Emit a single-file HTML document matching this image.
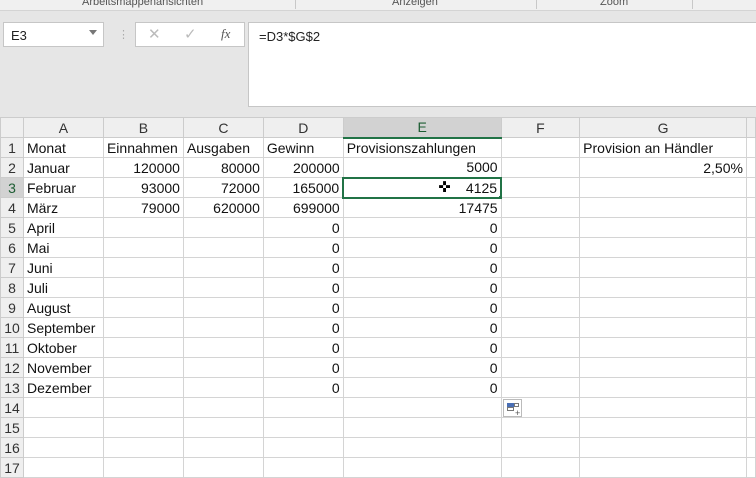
<!DOCTYPE html>
<html><head><meta charset="utf-8"><style>
*{margin:0;padding:0;box-sizing:border-box}
body{width:756px;height:471px;overflow:hidden;background:#e6e6e6;font-family:"Liberation Sans",sans-serif;position:relative}
.rib{position:absolute;left:0;top:0;width:756px;height:11px;background:#f0f0f0;border-bottom:1px solid #d4d4d4;font-size:11px;color:#555;overflow:hidden}
.rib span{position:absolute;top:-4px}
.sep{position:absolute;top:0;width:1px;height:9px;background:#c8c8c8}
.nb{position:absolute;left:3px;top:22px;width:101px;height:25px;background:#fff;border:1px solid #c6c6c6;font-size:13px;padding:5px 7px;color:#222}
.fb{position:absolute;left:135px;top:22px;width:110px;height:25px;background:#fff;border:1px solid #c6c6c6;color:#bbb;font-size:15px}
.fx{position:absolute;left:248px;top:22px;width:508px;height:85px;background:#fff;border:1px solid #c6c6c6;border-right:none;font-size:13px;padding:6px 10px;color:#222}
table{position:absolute;left:0;top:117px;border-collapse:collapse;table-layout:fixed;background:#fff;font-size:14px;color:#111}
td{height:20px;border:1px solid #d4d4d4;padding:0 3px;white-space:nowrap;overflow:hidden;line-height:18px}
td.h{background:#efefef;text-align:center;color:#333;border-color:#ccc;font-size:14px}
td.r{text-align:right}
td.s{background:#d2d2d2;color:#1e5e34}
</style></head><body>
<div class="rib"><span style="left:82px">Arbeitsmappenansichten</span><span style="left:392px">Anzeigen</span><span style="left:600px">Zoom</span>
<div class="sep" style="left:295px"></div><div class="sep" style="left:536px"></div><div class="sep" style="left:692px"></div></div>
<div class="nb">E3<span style="position:absolute;right:6px;top:7px;border:4px solid transparent;border-top:5px solid #777"></span></div>
<div style="position:absolute;left:118px;top:28px;color:#aaa;font-size:11px">⋮</div>
<div class="fb"><span style="position:absolute;left:12px;top:2px">✕</span><span style="position:absolute;left:48px;top:2px">✓</span><span style="position:absolute;left:85px;top:3px;color:#555;font-family:'Liberation Serif',serif;font-style:italic;font-size:13px">fx</span></div>
<div class="fx">=D3*$G$2</div>
<table>
<colgroup><col style="width:23px"><col style="width:80px"><col style="width:80px"><col style="width:80px"><col style="width:80px"><col style="width:158px"><col style="width:79px"><col style="width:167px"><col style="width:9px"></colgroup>
<tr><td class="h"></td><td class="h">A</td><td class="h">B</td><td class="h">C</td><td class="h">D</td><td class="h s" style="border-bottom:2px solid #217346">E</td><td class="h">F</td><td class="h">G</td><td class="h"></td></tr>
<tr><td class="h">1</td><td>Monat</td><td>Einnahmen</td><td>Ausgaben</td><td>Gewinn</td><td>Provisionszahlungen</td><td></td><td>Provision an Händler</td><td></td></tr>
<tr><td class="h">2</td><td>Januar</td><td class="r">120000</td><td class="r">80000</td><td class="r">200000</td><td class="r">5000</td><td></td><td class="r">2,50%</td><td></td></tr>
<tr><td class="h s">3</td><td>Februar</td><td class="r">93000</td><td class="r">72000</td><td class="r">165000</td><td class="r" style="border:2px solid #217346;position:relative">4125<span style="position:absolute;left:94px;top:0;font-size:15px;color:#000">✜</span><span style="position:absolute;right:-4px;bottom:-4px;width:6px;height:6px;background:#217346;border:1px solid #fff"></span></td><td></td><td></td><td></td></tr>
<tr><td class="h">4</td><td>März</td><td class="r">79000</td><td class="r">620000</td><td class="r">699000</td><td class="r">17475</td><td></td><td></td><td></td></tr>
<tr><td class="h">5</td><td>April</td><td></td><td></td><td class="r">0</td><td class="r">0</td><td></td><td></td><td></td></tr>
<tr><td class="h">6</td><td>Mai</td><td></td><td></td><td class="r">0</td><td class="r">0</td><td></td><td></td><td></td></tr>
<tr><td class="h">7</td><td>Juni</td><td></td><td></td><td class="r">0</td><td class="r">0</td><td></td><td></td><td></td></tr>
<tr><td class="h">8</td><td>Juli</td><td></td><td></td><td class="r">0</td><td class="r">0</td><td></td><td></td><td></td></tr>
<tr><td class="h">9</td><td>August</td><td></td><td></td><td class="r">0</td><td class="r">0</td><td></td><td></td><td></td></tr>
<tr><td class="h">10</td><td>September</td><td></td><td></td><td class="r">0</td><td class="r">0</td><td></td><td></td><td></td></tr>
<tr><td class="h">11</td><td>Oktober</td><td></td><td></td><td class="r">0</td><td class="r">0</td><td></td><td></td><td></td></tr>
<tr><td class="h">12</td><td>November</td><td></td><td></td><td class="r">0</td><td class="r">0</td><td></td><td></td><td></td></tr>
<tr><td class="h">13</td><td>Dezember</td><td></td><td></td><td class="r">0</td><td class="r">0</td><td></td><td></td><td></td></tr>
<tr><td class="h">14</td><td></td><td></td><td></td><td></td><td></td><td></td><td></td><td></td></tr>
<tr><td class="h">15</td><td></td><td></td><td></td><td></td><td></td><td></td><td></td><td></td></tr>
<tr><td class="h">16</td><td></td><td></td><td></td><td></td><td></td><td></td><td></td><td></td></tr>
<tr><td class="h">17</td><td></td><td></td><td></td><td></td><td></td><td></td><td></td><td></td></tr>
</table>
<div style="position:absolute;left:503px;top:399px;width:19px;height:18px;border:1px solid #bbb;background:#fff">
<div style="position:absolute;left:3px;top:3px;width:7px;height:4px;background:#4a6fb5"></div>
<div style="position:absolute;left:10px;top:3px;width:5px;height:4px;border:1px solid #777"></div>
<div style="position:absolute;left:3px;top:7px;width:7px;height:4px;border:1px solid #777"></div>
<div style="position:absolute;left:11px;top:8px;font-size:9px;color:#555">+</div></div>
</body></html>
